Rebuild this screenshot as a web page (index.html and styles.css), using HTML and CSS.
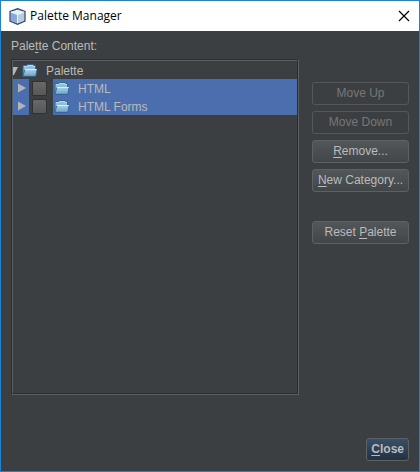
FILE: index.html
```html
<!DOCTYPE html>
<html lang="en">
<head>
<meta charset="utf-8">
<title>Palette Manager</title>
<link rel="stylesheet" href="styles.css">
</head>
<body>
<svg class="defs" aria-hidden="true">
  <defs>
    <linearGradient id="flap" x1="0" y1="0" x2="0" y2="1">
      <stop offset="0" stop-color="#a9d0e8"/>
      <stop offset="1" stop-color="#6fa5c9"/>
    </linearGradient>
    <symbol id="folder" viewBox="0 0 16 16">
      <path d="M1 13V2.500H4.500L5.500 1.500H11.500V2.500H13.500V8L12 13Z" fill="#8fbddb" stroke="#2f6890"/>
      <path d="M2 3.500H5L6 2.500H11V3.500H13" fill="none" stroke="#b9daee"/>
      <path d="M.8 13L2.800 6.500H15L13.800 13Z" fill="url(#flap)"/>
      <path d="M1 13L2.900 6.500M.8 13.300H13.800L15 6.500" fill="none" stroke="#2f6890" stroke-width=".9"/>
      <path d="M3 6.500H14.700" fill="none" stroke="#d8edf7"/>
    </symbol>
  </defs>
</svg>
<div class="window">
  <header class="titlebar">
    <svg class="app-icon" viewBox="0 0 16 16" aria-hidden="true">
      <path d="M8 .7L15 3.200V12.300L8 15.300L1 12.300V3.200Z" fill="#e3f2f8" stroke="#3a4a70" stroke-width="1.300"/>
      <path d="M1.800 4L7.800 6.200V14.300L1.800 11.800Z" fill="#86a8dc"/>
      <path d="M8.200 6.200L14.200 4V11.800L8.200 14.300Z" fill="#b5cfe0"/>
      <path d="M1.800 3.800L8 6.100L14.200 3.800M8 6V14.400" fill="none" stroke="#e6f3f8" stroke-width="1"/>
    </svg>
    <h1 class="title">Palette Manager</h1>
    <button class="window-close" aria-label="Close window">
      <svg viewBox="0 0 12 12" aria-hidden="true"><path d="M1 1L11 11M11 1L1 11" stroke="#000" stroke-width="1.200"/></svg>
    </button>
  </header>
  <main class="content">
    <h2 class="label" id="tree-label">Pale<u>t</u>te Content:</h2>
    <div class="columns">
      <div class="tree-frame">
        <ul class="tree" aria-labelledby="tree-label">
          <li class="row">
            <svg class="root-arrow" viewBox="0 0 8 18" aria-hidden="true"><path d="M0 6H5L1 14H0Z" fill="#b4b4b4"/></svg>
            <span class="cell"><svg class="folder" aria-hidden="true"><use href="#folder"/></svg>Palette</span>
          </li>
          <li class="row">
            <span class="handle"><svg viewBox="0 0 8 10" aria-hidden="true"><path d="M0 .5L8 5L0 9.500Z" fill="#b4b4b4"/></svg></span>
            <input class="check" type="checkbox" id="html">
            <label class="cell selected" for="html"><svg class="folder" aria-hidden="true"><use href="#folder"/></svg>HTML</label>
          </li>
          <li class="row">
            <span class="handle"><svg viewBox="0 0 8 10" aria-hidden="true"><path d="M0 .5L8 5L0 9.500Z" fill="#b4b4b4"/></svg></span>
            <input class="check" type="checkbox" id="forms">
            <label class="cell selected" for="forms"><svg class="folder" aria-hidden="true"><use href="#folder"/></svg>HTML Forms</label>
          </li>
        </ul>
      </div>
      <div class="actions">
        <button class="button" disabled>Move Up</button>
        <button class="button" disabled>Move Down</button>
        <button class="button"><u>R</u>emove...</button>
        <button class="button"><u>N</u>ew Category...</button>
        <button class="button reset">Reset <u>P</u>alette</button>
      </div>
    </div>
    <footer class="footer">
      <button class="button primary"><u>C</u>lose</button>
    </footer>
  </main>
</div>
</body>
</html>
```
FILE: styles.css
```css
* {
  box-sizing: border-box;
}

body {
  margin: 0;
  font: 12px/18px "Liberation Sans", Arial, sans-serif;
  color: #bbb;
}

u {
  text-decoration: underline;
  text-decoration-thickness: 1px;
  text-underline-offset: 2px;
  text-decoration-skip-ink: none;
}

.defs {
  position: absolute;
  width: 0;
  height: 0;
}

.window {
  display: flex;
  flex-direction: column;
  min-height: 100vh;
  border: 1px solid #1883d7;
  background: #3c3f41;
}

.titlebar {
  display: flex;
  align-items: center;
  height: 30px;
  padding: 0 9px 0 8px;
  background: #fff;
  color: #000;
}

.app-icon {
  width: 17px;
  height: 17px;
}

.title {
  flex: 1;
  margin: 0 0 0 4px;
  font: 12px/18px "Open Sans", "Noto Sans", sans-serif;
}

.window-close {
  display: flex;
  padding: 0;
  border: 0;
  background: none;
}

.window-close svg {
  width: 12px;
  height: 12px;
}

.content {
  flex: 1;
  display: flex;
  flex-direction: column;
  padding: 6px 10px 10px;
}

.label {
  margin: 0 0 4px;
  font: inherit;
}

.columns {
  flex: 1;
  display: flex;
  gap: 13px;
}

.tree-frame {
  flex: 1;
  display: flex;
  border: 1px solid;
  border-color: #2b2d2e #5b5e60 #5b5e60 #2b2d2e;
}

.tree {
  flex: 1;
  margin: 0;
  padding: 0;
  border: 1px solid;
  border-color: #5b5e60 #2b2d2e #2b2d2e #5b5e60;
  list-style: none;
}

.row {
  display: flex;
  align-items: center;
  height: 18px;
}

.root-arrow {
  width: 8px;
  height: 18px;
}

.cell {
  display: flex;
  align-items: center;
  flex: 1;
  gap: 8px;
  height: 18px;
  padding: 2px 0 0 1px;
}

.selected,
.handle {
  background: #4b6eaf;
}

.handle {
  display: flex;
  align-items: center;
  justify-content: flex-end;
  width: 16px;
  height: 18px;
  padding-right: 3px;
}

.handle svg {
  width: 8px;
  height: 10px;
}

.folder {
  width: 16px;
  height: 16px;
}

.check {
  appearance: none;
  width: 15px;
  height: 15px;
  margin: 0 6px 0 3px;
  border: 1px solid #2f3133;
  border-radius: 2px;
  background: linear-gradient(#686868, #585858);
}

.actions {
  display: flex;
  flex-direction: column;
  gap: 6px;
  width: 97px;
  padding-top: 23px;
}

.button {
  height: 23px;
  padding: 0;
  border: 1px solid #5e6162;
  border-radius: 3px;
  background: linear-gradient(#525759, #414648);
  font: inherit;
  line-height: 21px;
  color: #bbb;
  white-space: nowrap;
}

.button:disabled {
  border-color: #55585a;
  background: none;
  color: #777;
}

.reset {
  margin-top: 23px;
}

.footer {
  display: flex;
  justify-content: flex-end;
  padding-top: 43px;
}

.primary {
  padding: 0 4px;
  background: linear-gradient(#384f6b, #233143);
  font-weight: bold;
}
```
